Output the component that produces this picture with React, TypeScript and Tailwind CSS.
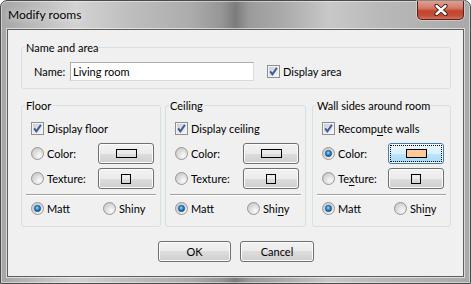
import type { ReactNode } from 'react';
import clsx from 'clsx';

function CheckBox() {
  return (
    <svg width="13" height="13" viewBox="0 0 13 13" className="shrink-0">
      <defs>
        <linearGradient id="cbFill" x1="0" y1="0" x2="1" y2="1">
          <stop offset="0" stopColor="#c9ccd1" />
          <stop offset="1" stopColor="#f7f7f7" />
        </linearGradient>
      </defs>
      <rect x="0.5" y="0.5" width="12" height="12" fill="#f4f4f4" stroke="#8e8f8f" />
      <rect x="2" y="2" width="9" height="9" fill="url(#cbFill)" />
      <path d="M3.2 6.4 L5.4 9.3 L9.9 2.9" fill="none" stroke="#3f5a98" strokeWidth="1.9" />
    </svg>
  );
}

function Radio({ on }: { on?: boolean }) {
  return (
    <svg width="13" height="13" viewBox="0 0 13 13" className="shrink-0">
      <defs>
        <radialGradient id="rdOff" cx="0.65" cy="0.7" r="0.75">
          <stop offset="0" stopColor="#fbfbfb" />
          <stop offset="1" stopColor="#c8c8c8" />
        </radialGradient>
        <radialGradient id="rdDot" cx="0.45" cy="0.4" r="0.65">
          <stop offset="0" stopColor="#9fe3fb" />
          <stop offset="0.45" stopColor="#2b8ad0" />
          <stop offset="1" stopColor="#164179" />
        </radialGradient>
      </defs>
      <circle cx="6.5" cy="6.5" r="6" fill="url(#rdOff)" stroke="#979797" />
      {on && <circle cx="6.5" cy="6.5" r="3.2" fill="url(#rdDot)" stroke="#1d4b80" strokeWidth="0.6" />}
    </svg>
  );
}

function Btn({ children, focused, className }: { children: ReactNode; focused?: boolean; className?: string }) {
  return (
    <div
      className={clsx(
        'flex h-[21px] items-stretch rounded-[3px] border',
        focused
          ? 'border-[#3c7fb1] bg-[linear-gradient(#eaf6fd_0%,#d9f0fc_50%,#bee6fd_50%,#a7d9f5_100%)] shadow-[inset_0_0_0_1px_#f4fbff]'
          : 'border-[#707070] bg-[linear-gradient(#f2f2f2_0%,#ebebeb_50%,#dddddd_50%,#cfcfcf_100%)] shadow-[inset_0_0_0_1px_#fbfbfb]',
        className,
      )}
    >
      <div
        className={clsx(
          'm-[1px] flex flex-1 items-center justify-center border',
          focused ? 'border-dotted border-black' : 'border-transparent',
        )}
      >
        {children}
      </div>
    </div>
  );
}

function Group({ title, className, children }: { title: string; className?: string; children: ReactNode }) {
  return (
    <fieldset className={clsx('min-w-0 rounded-[3px] border border-[#d5dfe5]', className)}>
      <legend className="ml-[3px] px-[1px] leading-[15px]">{title}</legend>
      {children}
    </fieldset>
  );
}

function OptionRow({ label, on, swatch, focused }: { label: ReactNode; on?: boolean; swatch: ReactNode; focused?: boolean }) {
  return (
    <div className="flex h-[25px] items-center">
      <Radio on={on} />
      <span className="ml-[3px]">{label}</span>
      <Btn className="ml-auto w-[56px]" focused={focused}>
        {swatch}
      </Btn>
    </div>
  );
}

function Surface({ title, check, colorOn, wall }: { title: string; check: ReactNode; colorOn?: boolean; wall?: boolean }) {
  return (
    <Group title={title} className={wall ? 'flex-1' : title === 'Floor' ? 'w-[140px]' : 'ml-[4px] w-[141px]'}>
      <div className="pl-[9px] pr-[6px] pt-[3px]">
        <div className="flex h-[25px] items-center">
          <CheckBox />
          <span className="ml-[3px]">{check}</span>
        </div>
        <OptionRow
          label="Color:"
          on={colorOn}
          focused={wall}
          swatch={<div className={clsx('h-[9px] w-[21px] border border-black', wall && 'bg-[#ffca99]')} />}
        />
        <OptionRow
          label={
            wall ? (
              <>
                Te<span className="underline underline-offset-2">x</span>ture:
              </>
            ) : (
              'Texture:'
            )
          }
          swatch={<div className="h-[10px] w-[10px] border border-black" />}
        />
      </div>
      <div className="mx-[4px] mt-[3px] h-[2px] border-t border-[#a0a0a0] bg-white" />
      <div className="mb-[5px] flex h-[25px] items-center pl-[9px]">
        <div className="flex w-[72px] items-center">
          <Radio on />
          <span className="ml-[3px]">Matt</span>
        </div>
        <Radio />
        <span className="ml-[3px]">
          {title === 'Floor' ? (
            'Shiny'
          ) : (
            <>
              Shi<span className="underline underline-offset-2">n</span>y
            </>
          )}
        </span>
      </div>
    </Group>
  );
}

export default function App() {
  return (
    <div className="h-[284px] w-[471px] overflow-hidden font-[family-name:Lato,'Noto_Sans',sans-serif] text-[11px] leading-[15px] text-black">
      <div className="flex h-full flex-col rounded-t-[7px] border border-[#4b4b4b] bg-[linear-gradient(90deg,#a6a6a6_0%,#c2c2c2_10%,#d3d3d3_16%,#bdbdbd_28%,#adadad_40%,#969696_47%,#7c7c7c_50%,#9b9b9b_53%,#aaaaaa_60%,#c8c8c8_70%,#bababa_80%,#a9a9a9_100%)] px-[6px] pb-[6px] shadow-[inset_0_0_0_1px_rgba(255,255,255,0.45)]">
        {/* Title bar */}
        <div className="flex h-[28px] shrink-0 items-start">
          <span className="ml-[1px] mt-[6px] text-[12px] [text-shadow:0_0_6px_rgba(255,255,255,0.9)]">Modify rooms</span>
          <div className="ml-auto flex h-[19px] w-[47px] items-center justify-center rounded-b-[5px] border border-t-0 border-[#5a2018] bg-[linear-gradient(#dfa090_0%,#d27a68_40%,#c2452f_55%,#c44c34_80%,#d27060_100%)] shadow-[0_0_0_1px_rgba(255,255,255,0.35)]">
            <svg width="14" height="12" viewBox="0 0 14 12">
              <path d="M2.5 2 L11.5 10 M11.5 2 L2.5 10" stroke="#3a1410" strokeWidth="4.2" strokeLinecap="round" />
              <path d="M2.5 2 L11.5 10 M11.5 2 L2.5 10" stroke="#ffffff" strokeWidth="2.4" strokeLinecap="round" />
            </svg>
          </div>
        </div>

        {/* Client area */}
        <div className="flex flex-1 flex-col border border-[#5f5f5f] bg-[#f0f0f0] pl-[13px] pr-[12px] pt-[10px] shadow-[0_0_0_1px_rgba(255,255,255,0.55)]">
          <Group title="Name and area">
            <div className="flex items-center pl-[12px] pt-[7px] pb-[7px]">
              <span className="w-[36px]">Name:</span>
              <div className="flex h-[19px] w-[184px] items-center border border-[#abadb3] border-b-[#d6d9de] border-r-[#d6d9de] bg-white pl-[2px]">
                Living room
              </div>
              <div className="ml-[13px]">
                <CheckBox />
              </div>
              <span className="ml-[3px]">Display area</span>
            </div>
          </Group>

          <div className="mt-[9px] flex">
            <Surface title="Floor" check="Display floor" />
            <Surface title="Ceiling" check="Display ceiling" />
            <div className="ml-[6px] flex flex-1">
              <Surface
                title="Wall sides around room"
                wall
                colorOn
                check={
                  <>
                    Recomp<span className="underline underline-offset-2">u</span>te walls
                  </>
                }
              />
            </div>
          </div>

          <div className="mt-[14px] flex justify-center gap-[9px]">
            <Btn className="w-[73px]">OK</Btn>
            <Btn className="w-[74px]">Cancel</Btn>
          </div>
        </div>
      </div>
    </div>
  );
}
